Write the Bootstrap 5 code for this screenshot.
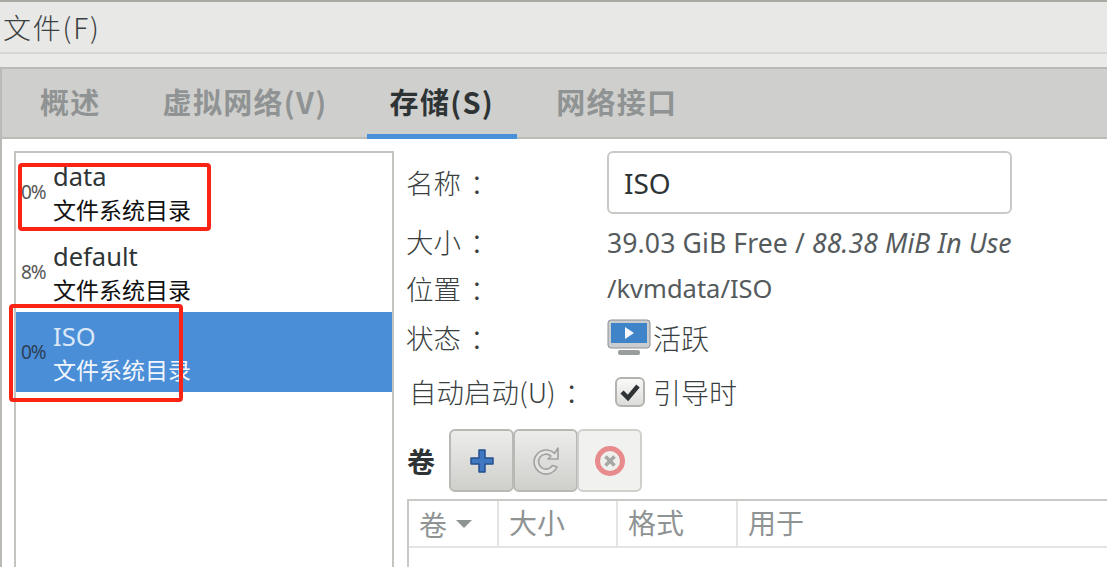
<!DOCTYPE html>
<html lang="zh">
<head>
<meta charset="utf-8">
<title>存储</title>
<link rel="stylesheet" href="https://cdn.jsdelivr.net/npm/bootstrap@5.3.0/dist/css/bootstrap.min.css">
<style>
html,body{height:567px;overflow:hidden;}
body{font-family:"Noto Sans","Noto Sans CJK SC",sans-serif;color:#2e3436;background:#e8e8e7;position:relative;}
.cjk{font-family:"Noto Sans CJK SC",sans-serif;font-weight:300;}
.colon{font-family:"Noto Sans CJK TC",sans-serif;margin-left:9px;}
.topline{height:2px;background:#a9a9a4;}
.menubar{height:52px;background:#e8e8e7;border-bottom:2px solid #d6d6d3;font-size:28px;letter-spacing:1.8px;padding-left:3px;line-height:50px;color:#3a3f41;}
.gapstrip{height:13px;background:#eaeae9;}
.notebook{border-top:2px solid #b9b9b6;border-left:2px solid #b9b9b6;height:500px;background:#fff;}
.tabbar{height:70px;background:#cfcfcd;border-bottom:2px solid #bcbcb9;padding-left:7px;font-family:"Noto Sans CJK SC",sans-serif;}
.tabitem{height:68px;padding:0 23px;margin:0 8px;font-size:29px;letter-spacing:1.3px;font-weight:700;color:#8f9393;line-height:64px;}
.tabitem.on{color:#2e3436;border-bottom:5px solid #4a90d9;margin-bottom:-2px;height:70px;}
.panes{height:428px;padding:12px 0 0 12px;}
.poollist{width:380px;height:420px;border:2px solid #c4c4c1;border-bottom:0;flex:none;}
.poolstack{margin-top:-1px;}
.poolrow{height:80px;color:#2e3436;padding-left:5px;}
.poolrow.sel{background:#4a8ed8;color:#dbe8f8;}
.poolpct{width:32px;font-size:19px;color:#555;flex:none;letter-spacing:-1px;}
.poolrow.sel .poolpct{color:#2d3f55;}
.poolname{font-size:25.5px;line-height:33px;padding-top:2px;}
.pooltype{font-size:23px;line-height:33px;color:#111;font-weight:400;}
.poolrow.sel .pooltype{color:#f2f6fc;}
.detail{margin-left:13px;width:700px;flex:none;}
.lbl{width:201px;margin-left:-1px;flex:none;font-size:27.5px;color:#3a3f41;}
.rowname{height:63px;}
.rowinfo{height:47px;}
.gap4{margin-top:4px;}
.gap2{margin-top:2px;}
.gap7{margin-top:7px;}
.gap14{margin-top:14px;}
.nameinput{width:405px;height:63px;border:2px solid #c9c9c6;border-radius:6px;font-size:28px;color:#2e3436;padding:0 15px;box-shadow:none;}
.valtext{font-size:26.6px;color:#555b5d;letter-spacing:.1px;padding-top:4px;}
.pathtext{font-size:25.5px;color:#555b5d;}
.lg{font-size:28px;color:#3a3f41;}
.autolbl{padding-left:3px;}
.statusicon{margin-right:2px;}
.chk{width:30px;height:30px;border:2px solid #b3b3af;border-radius:6px;background:linear-gradient(#fafafa,#dcdcd9);margin-right:8px;}
.volhead{font-size:28px;font-weight:700;width:42px;flex:none;color:#2e3436;font-family:"Noto Sans CJK SC",sans-serif;}
.toolbtn{width:65px;height:63px;padding:0;border:2px solid #b8b8b4;border-radius:6px;background:linear-gradient(#ececea,#cfcfcc);margin-right:-1px;}
.toolbtn.off{background:#f1f1f0;border-color:#cfcfcc;}
.voltable{border:2px solid #c9c9c6;border-right:0;border-bottom:0;height:70px;margin-top:7px;}
.volhdr{height:47px;border-bottom:2px solid #e4e4e2;font-size:28px;font-weight:400;color:#8f9393;}
.volcol{height:100%;border-right:2px solid #e4e4e2;padding-left:10px;line-height:42px;flex:none;}
.marker{position:absolute;border:4px solid #fb2314;border-radius:4px;pointer-events:none;}
</style>
</head>
<body>
<div class="topline"></div>
<div class="menubar cjk">文件(F)</div>
<div class="gapstrip"></div>
<div class="notebook">
  <div class="tabbar d-flex">
    <div class="tabitem">概述</div>
    <div class="tabitem">虚拟网络(V)</div>
    <div class="tabitem on">存储(S)</div>
    <div class="tabitem">网络接口</div>
  </div>
  <div class="panes d-flex">
    <div class="poollist">
      <div class="poolstack">
      <div class="poolrow d-flex align-items-center">
        <div class="poolpct">0%</div>
        <div><div class="poolname">data</div><div class="pooltype cjk">文件系统目录</div></div>
      </div>
      <div class="poolrow d-flex align-items-center">
        <div class="poolpct">8%</div>
        <div><div class="poolname">default</div><div class="pooltype cjk">文件系统目录</div></div>
      </div>
      <div class="poolrow sel d-flex align-items-center">
        <div class="poolpct">0%</div>
        <div><div class="poolname">ISO</div><div class="pooltype cjk">文件系统目录</div></div>
      </div>
      </div>
    </div>
    <div class="detail">
      <div class="d-flex align-items-center rowname">
        <div class="lbl cjk">名称<span class="colon">：</span></div>
        <input class="form-control nameinput" value="ISO">
      </div>
      <div class="d-flex align-items-center rowinfo gap4">
        <div class="lbl cjk">大小<span class="colon">：</span></div>
        <div class="valtext">39.03 GiB Free / <em>88.38 MiB In Use</em></div>
      </div>
      <div class="d-flex align-items-center rowinfo">
        <div class="lbl cjk">位置<span class="colon">：</span></div>
        <div class="pathtext">/kvmdata/ISO</div>
      </div>
      <div class="d-flex align-items-center rowinfo gap2">
        <div class="lbl cjk">状态<span class="colon">：</span></div>
        <svg width="44" height="38" viewBox="0 0 44 38" class="statusicon">
          <rect x="1" y="1" width="42" height="28" rx="3" fill="#c9cdcf" stroke="#8c9092"/>
          <rect x="4" y="4" width="36" height="20" fill="#3f84c8"/>
          <path d="M18 8l9 6-9 6z" fill="#f4f8fc"/>
          <rect x="11" y="31" width="22" height="5" rx="2" fill="#9a9d9e"/>
        </svg>
        <div class="lg cjk">活跃</div>
      </div>
      <div class="d-flex align-items-center rowinfo gap7">
        <div class="lbl cjk autolbl">自动启动(U)<span class="colon">：</span></div>
        <div class="chk d-flex align-items-center justify-content-center ms-2">
          <svg width="22" height="20" viewBox="0 0 22 20"><path d="M3 10l6 6L19 4" fill="none" stroke="#2e3436" stroke-width="4.5"/></svg>
        </div>
        <div class="lg cjk">引导时</div>
      </div>
      <div class="d-flex align-items-center gap14">
        <div class="volhead">卷</div>
        <button class="btn toolbtn d-flex align-items-center justify-content-center" aria-label="添加">
          <svg width="26" height="26" viewBox="0 0 26 26"><path d="M10 2h6v8h8v6h-8v8h-6v-8H2v-6h8z" fill="#3f78c0" stroke="#24508f" stroke-width="1.5" stroke-linejoin="round"/></svg>
        </button>
        <button class="btn toolbtn d-flex align-items-center justify-content-center" aria-label="刷新">
          <svg width="32" height="32" viewBox="0 0 32 32"><path d="M24.5 8.5A12 12 0 1 0 27 22l-4.5-1.5A7.5 7.5 0 1 1 21 11l-3 3h10V3z" fill="#e4e4e1" stroke="#a0a2a0" stroke-width="1.6" stroke-linejoin="round"/></svg>
        </button>
        <button class="btn toolbtn off d-flex align-items-center justify-content-center" aria-label="删除">
          <svg width="32" height="32" viewBox="0 0 32 32"><circle cx="16" cy="16" r="12.5" fill="#eeeeec" stroke="#e78b8c" stroke-width="5"/><path d="M11.5 11.5l9 9M20.5 11.5l-9 9" stroke="#a6a6a4" stroke-width="3.5"/></svg>
        </button>
      </div>
      <div class="voltable cjk">
        <div class="volhdr d-flex">
          <div class="volcol d-flex align-items-center" style="width:90px">卷<svg class="ms-2" width="18" height="10" viewBox="0 0 18 10"><path d="M1 1h16L9 9z" fill="#8f9393"/></svg></div>
          <div class="volcol" style="width:119px">大小</div>
          <div class="volcol" style="width:120px">格式</div>
          <div class="volcol border-0">用于</div>
        </div>
      </div>
    </div>
  </div>
</div>
<div class="marker" style="left:18px;top:163px;width:193px;height:68px"></div>
<div class="marker" style="left:9px;top:304px;width:174px;height:98px"></div>
<script src="https://cdn.jsdelivr.net/npm/bootstrap@5.3.0/dist/js/bootstrap.bundle.min.js"></script>
</body>
</html>
